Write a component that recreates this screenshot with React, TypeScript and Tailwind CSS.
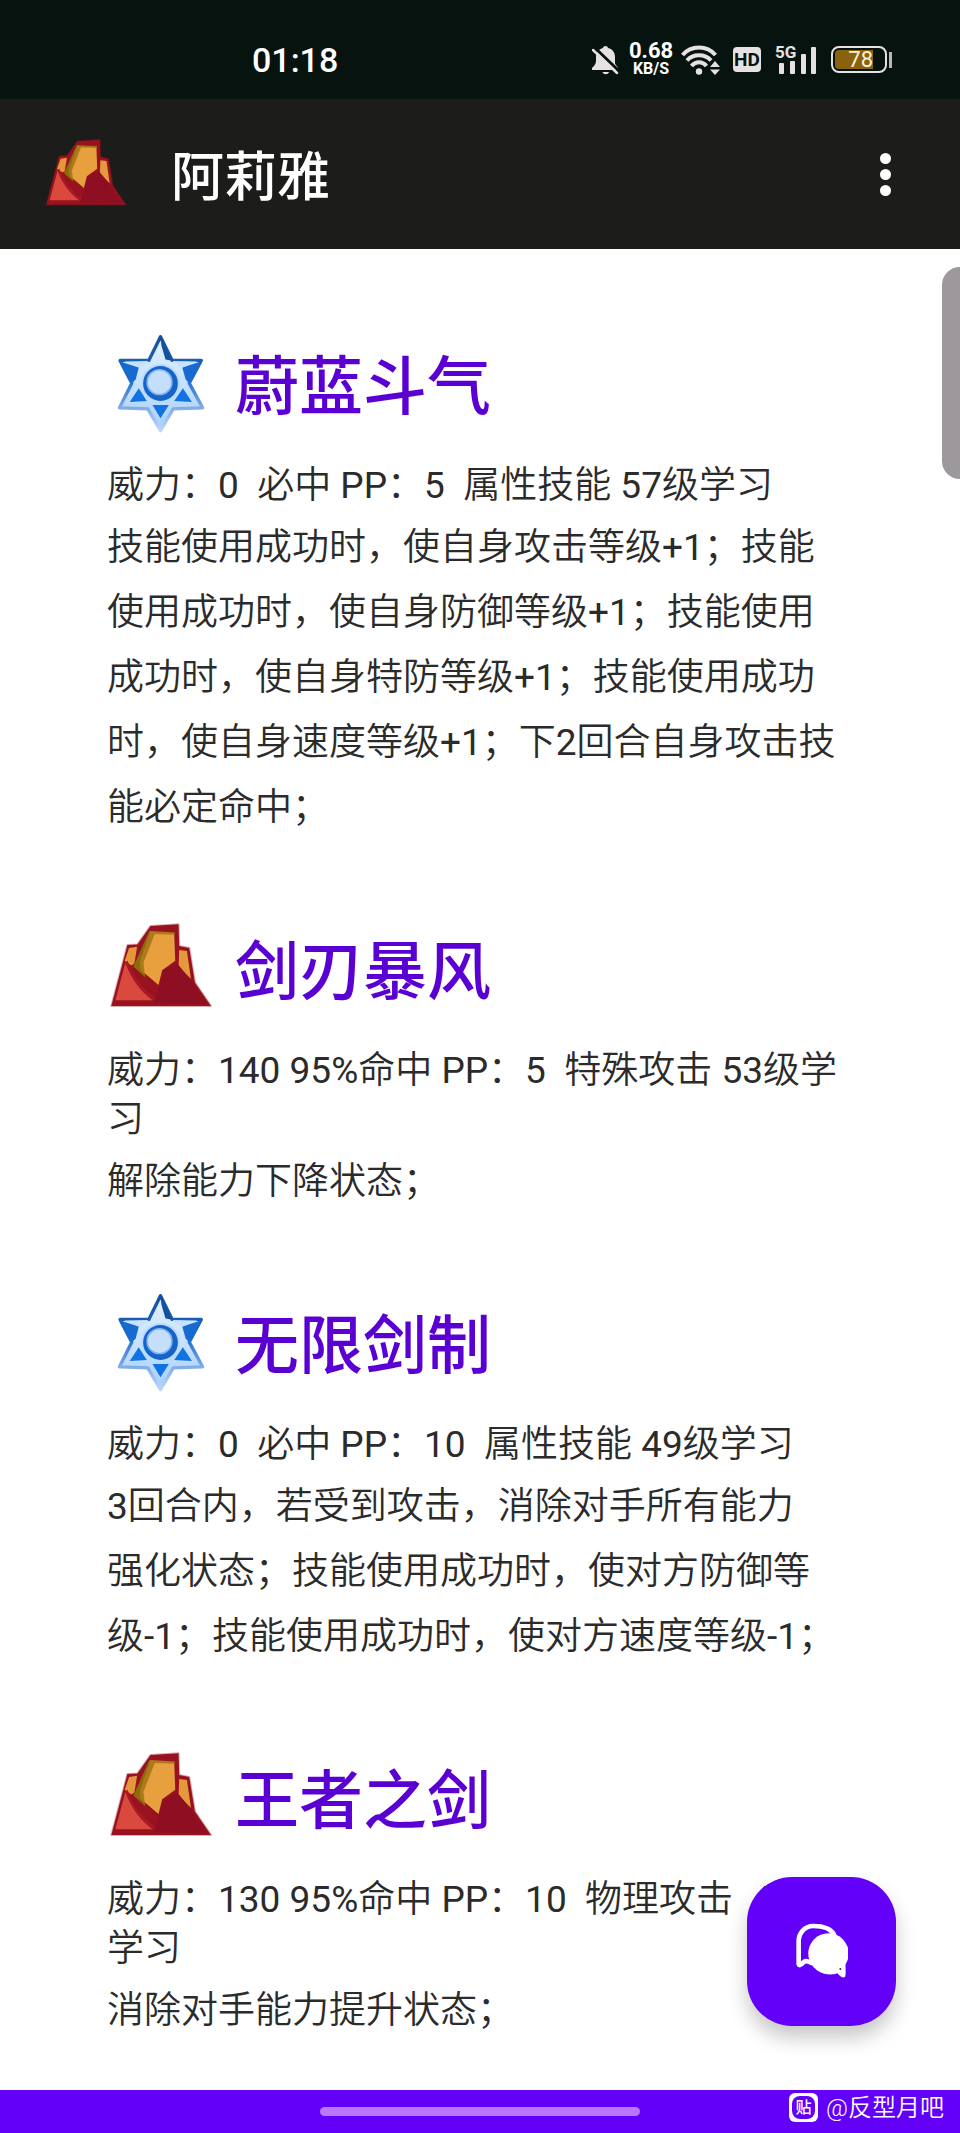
import type { ReactNode } from "react";

type Skill = {
  name: string;
  kind: "attribute" | "attack";
  meta: string;
  description: string;
};

const skills: Skill[] = [
  {
    name: "蔚蓝斗气",
    kind: "attribute",
    meta: "威力：0  必中 PP：5  属性技能 57级学习",
    description:
      "技能使用成功时，使自身攻击等级+1；技能使用成功时，使自身防御等级+1；技能使用成功时，使自身特防等级+1；技能使用成功时，使自身速度等级+1；下2回合自身攻击技能必定命中；",
  },
  {
    name: "剑刃暴风",
    kind: "attack",
    meta: "威力：140 95%命中 PP：5  特殊攻击 53级学习",
    description: "解除能力下降状态；",
  },
  {
    name: "无限剑制",
    kind: "attribute",
    meta: "威力：0  必中 PP：10  属性技能 49级学习",
    description:
      "3回合内，若受到攻击，消除对手所有能力\n强化状态；技能使用成功时，使对方防御等级-1；技能使用成功时，使对方速度等级-1；",
  },
  {
    name: "王者之剑",
    kind: "attack",
    meta: "威力：130 95%命中 PP：10  物理攻击  45级学习",
    description: "消除对手能力提升状态；",
  },
];

const RockIcon = ({ className }: { className: string }) => (
  <svg viewBox="51 51 320 320" className={className} aria-hidden="true">
    <path
      d="M64 317 L112 135 L142 133 L181 78 L265 73 L267 138 L297 144 L314 247 L362 317Z"
      fill="#98131f"
      stroke="#98131f"
      strokeOpacity="0.35"
      strokeWidth="6"
      strokeLinejoin="round"
    />
    <path d="M104 182 L117 144 L141 140 L133 190 L124 196Z" fill="#e5963a" />
    <path d="M267 150 L290 153 L302 236 L265 200Z" fill="#e5993c" />
    <path d="M130 199 L178 92 L192 98 L158 188 L166 232Z" fill="#8b6b0b" />
    <path d="M184 98 L252 100 L255 182 L216 210 L205 254 L160 216 L157 184 Z" fill="#e8a03e" />
    <path d="M181 93 L254 97 L253 104 L194 102 L160 188 L164 222 L151 208 L149 185Z" fill="#ac7a1a" />
    <path d="M76 300 L106 188 C125 239 152 274 188 300Z" fill="#d9493e" />
    <path d="M106 188 C125 239 152 274 188 300 L218 304 C166 280 130 235 112 181Z" fill="#a81826" />
    <path d="M207 259 L218 210 L262 191 L303 242 L352 313 L190 309Z" fill="#8e0f22" />
  </svg>
);

const StarIcon = ({ className }: { className: string }) => (
  <svg viewBox="51 66 320 320" className={className} aria-hidden="true">
    <defs>
      <linearGradient id="star-edge" x1="0" y1="0" x2="0" y2="1">
        <stop offset="0" stopColor="#164f9b" />
        <stop offset="0.45" stopColor="#1b6bcf" />
        <stop offset="0.75" stopColor="#7fabe6" />
        <stop offset="1" stopColor="#bdd8fb" />
      </linearGradient>
      <linearGradient id="star-face" x1="0" y1="0" x2="0" y2="1">
        <stop offset="0" stopColor="#e3f2ff" />
        <stop offset="1" stopColor="#a9d0fb" />
      </linearGradient>
    </defs>
    <path
      d="M211 80 L246 151 L333 151 L297 219 L337 293 L249 296 L211 361 L173 296 L88 293 L125 219 L90 151 L176 151Z"
      fill="url(#star-face)"
      stroke="url(#star-edge)"
      strokeWidth="10"
      strokeLinejoin="round"
    />
    <path d="M211 82 L247 152 L226 148 L214 108Z" fill="#154f9d" />
    <path d="M90 154 L146 172 L137 207 L126 219Z" fill="#176bd0" />
    <path d="M332 154 L276 172 L286 207 L296 219Z" fill="#176bd0" />
    <path d="M102 154 L175 153 L160 166 L150 174Z" fill="#c7e2ff" />
    <path d="M247 153 L320 154 L274 174 L257 162Z" fill="#c7e2ff" />
    <path d="M119 275 L146 234 L170 272Z M252 272 L278 234 L305 275Z M187 284 L236 284 L211 324Z" fill="#1172e3" />
    <circle cx="211" cy="220" r="58" fill="#b8dcff" />
    <circle cx="211" cy="220" r="52" fill="#1763c8" />
    <circle cx="208" cy="216" r="37" fill="#c5dffa" stroke="#80b5f3" strokeWidth="5" />
  </svg>
);

const BellOffIcon = () => (
  <svg viewBox="0 0 27 30" className="h-[30px] w-[27px] shrink-0" aria-hidden="true">
    <path
      d="M11 3 C11 .2 16 .2 16 3 C21 4 23 8 23 12 V18 C23 20 26 21 26 24 V25 H0 V23 C2 21 4 19 4 16 V12 C4 7 7 4 11 3Z"
      fill="#e6e1e3"
    />
    <path d="M10.500 27 H17 C16 30 11.500 30 10.500 27Z" fill="#e6e1e3" />
    <path d="M2 2 L28 27" stroke="#07130e" strokeWidth="3" />
    <path d="M1 5 L25 28" stroke="#e6e1e3" strokeWidth="2.500" strokeLinecap="round" />
  </svg>
);

const WifiIcon = () => (
  <svg viewBox="0 0 40 30" className="h-[30px] w-10 shrink-0" aria-hidden="true">
    <g fill="none" stroke="#e6e1e3" strokeWidth="4">
      <path d="M1.500 10 C10 0 26 0 34.500 10" />
      <path d="M6 15.500 C12 8.500 24 8.500 30 15.500" />
      <path d="M10.500 21 C14.500 16 21.500 16 25.500 21" />
    </g>
    <circle cx="18" cy="26.500" r="3.200" fill="#e6e1e3" />
    <path d="M34 16 L39 22 H29Z M34 30 L39 24.500 H29Z" fill="#e6e1e3" />
  </svg>
);

const SignalIcon = () => (
  <svg viewBox="0 0 42 30" className="h-[30px] w-[42px] shrink-0 overflow-visible" aria-hidden="true">
    <g fill="#e6e1e3">
      <rect x="4" y="18" width="5" height="11" rx="1" />
      <rect x="15" y="16" width="5" height="13" rx="1" />
      <rect x="26" y="9" width="5" height="20" rx="1" />
      <rect x="36" y="2" width="5" height="27" rx="1" />
      <text x="0" y="13" fontSize="17" fontWeight="700" fontFamily="Roboto, sans-serif">5G</text>
    </g>
  </svg>
);

const ChatIcon = () => (
  <svg viewBox="0 0 160 170" className="h-[57px] w-[53px]" aria-hidden="true">
    <path
      d="M118 34 C104 8 69 8 55 8 C28 8 11 31 11 54 V121 C11 129 17 127 24 119 C32 111 37 114 49 119"
      fill="none"
      stroke="#fff"
      strokeWidth="14"
      strokeLinecap="round"
    />
    <circle cx="101" cy="91" r="61" fill="#fff" />
    <path d="M64 140 C89 157 111 157 128 151 C137 161 143 166 151 162 C154 157 153 143 152 118 L143 82Z" fill="#fff" />
    <circle cx="137" cy="138" r="3" fill="#40206d" />
  </svg>
);

const StatusBar = () => (
  <div className="flex h-[99px] items-center justify-between bg-[#07130e] pt-5 pr-[68px] pl-[252px] text-[#e6e1e3]">
    <time className="text-[34px] leading-10 font-medium text-white">01:18</time>
    <div className="flex items-center">
      <BellOffIcon />
      <div className="ml-2.5 flex w-11 flex-col items-center text-white">
        <span className="text-[22px] leading-[18px] font-bold">0.68</span>
        <span className="text-base leading-[18px] font-bold">KB/S</span>
      </div>
      <div className="ml-2 flex items-center gap-3">
        <WifiIcon />
        <span className="flex h-[25px] w-7 items-center justify-center rounded-sm bg-[#e6e1e3] text-[19px] leading-6 font-bold text-[#07130e]">
          HD
        </span>
        <span className="ml-0.5">
          <SignalIcon />
        </span>
      </div>
      <div className="ml-3.5 flex items-center gap-0.5">
        <div className="flex h-[27px] w-14 rounded-lg border-2 border-[#e6e1e3] p-0.5">
          <div className="flex w-[38px] items-center justify-end rounded-l-sm bg-[#8a620d] text-[22px] leading-5 text-[#fff2dc]">
            78
          </div>
        </div>
        <span className="h-4 w-[3px] bg-[#b9b7b5]" />
      </div>
    </div>
  </div>
);

const AppBar = ({ children }: { children: ReactNode }) => (
  <header className="flex h-[150px] items-center bg-[#1c1c1a] pr-[53px] pl-[43px]">
    <RockIcon className="mt-1 h-[85px] w-[85px]" />
    <h1 className="ml-[43px] flex-1 pt-2 text-[53px] leading-none font-medium text-white">{children}</h1>
    <button type="button" aria-label="更多选项" className="flex w-11 flex-col items-center gap-[5px] py-4">
      <span className="size-[11px] rounded-full bg-white" />
      <span className="size-[11px] rounded-full bg-white" />
      <span className="size-[11px] rounded-full bg-white" />
    </button>
  </header>
);

const SkillItem = ({ skill }: { skill: Skill }) => {
  const Icon = skill.kind === "attribute" ? StarIcon : RockIcon;
  return (
    <article>
      <div className="flex items-center gap-[21px]">
        <Icon className="size-[107px] shrink-0" />
        <h2 className="pt-1 text-[64px] leading-[80px] font-medium text-[#5a00d2]">{skill.name}</h2>
      </div>
      <div className="mt-[22px] flex flex-col gap-[5px] font-[Roboto,'Noto_Sans_CJK_SC_DemiLight','Noto_Sans_CJK_SC',sans-serif] text-[37px] whitespace-pre-wrap">
        <p className="leading-[49px]">{skill.meta}</p>
        <p className="leading-[65px]">{skill.description}</p>
      </div>
    </article>
  );
};

const App = () => {
  return (
    <div
      lang="zh-CN"
      className="relative flex min-h-screen flex-col bg-white font-[Roboto,'Noto_Sans_CJK_SC',sans-serif] text-[#2b2b2b]"
    >
      <StatusBar />
      <AppBar>阿莉雅</AppBar>

      <main className="flex flex-1 flex-col gap-[77px] pt-[83px] pr-28 pb-10 pl-[107px]">
        {skills.map((skill) => (
          <SkillItem key={skill.name} skill={skill} />
        ))}
      </main>

      {/* scroll thumb, half tucked under the right edge */}
      <div className="absolute top-[267px] right-0 h-[212px] w-[18px] rounded-l-[20px] bg-[#9c989b]" />

      <button
        type="button"
        aria-label="聊天"
        className="absolute right-16 bottom-[107px] flex size-[149px] items-center justify-center rounded-[45px] bg-[#6200f8] shadow-[0_12px_20px_rgba(0,0,0,0.22)]"
      >
        <ChatIcon />
      </button>

      <footer className="grid h-[43px] grid-cols-3 items-center bg-[#6200f8] text-white">
        <span className="col-start-2 h-[9px] rounded-full bg-[#b977fb]" />
        <div className="flex items-center justify-end gap-2 pr-4 pb-2">
          <span className="flex size-[29px] items-center justify-center rounded-md bg-white">
            <span className="flex size-[23px] items-center justify-center rounded-lg bg-[#6200f8] text-base leading-none font-medium">
              贴
            </span>
          </span>
          <span className="text-2xl leading-7 font-[350]">@反型月吧</span>
        </div>
      </footer>
    </div>
  );
};

export default App;
